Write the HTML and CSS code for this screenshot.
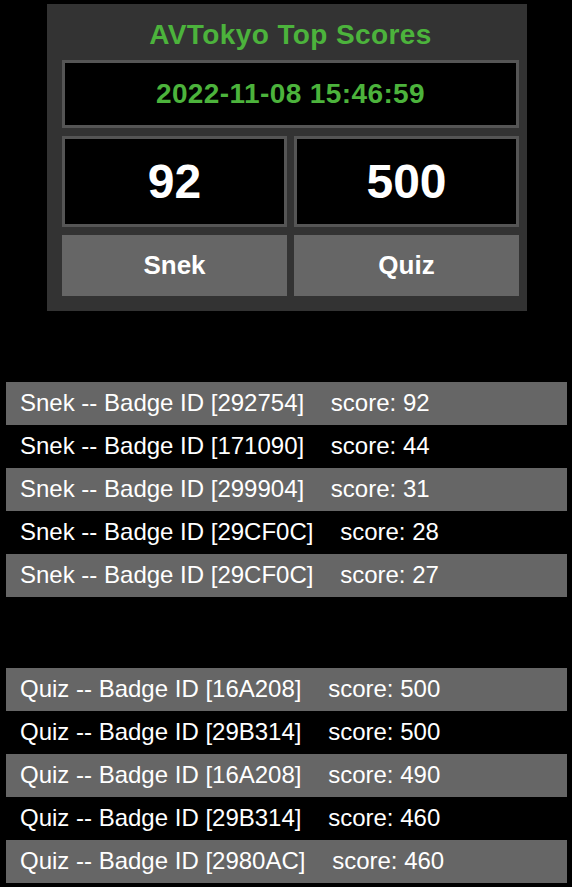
FILE: index.html
```html
<!DOCTYPE html>
<html>
<head>
<meta charset="utf-8">
<title>AVTokyo Top Scores</title>
<link rel="stylesheet" href="styles.css">
</head>
<body>
<div class="panel">
  <h1 class="title">AVTokyo Top Scores</h1>
  <div class="date box">2022-11-08 15:46:59</div>
  <div class="grid">
    <div class="score box">92</div>
    <div class="score box">500</div>
    <div class="btn">Snek</div>
    <div class="btn">Quiz</div>
  </div>
</div>

<div class="list">
  <div class="row">Snek -- Badge ID [292754]&nbsp;&nbsp;&nbsp;&nbsp;score: 92</div>
  <div class="row">Snek -- Badge ID [171090]&nbsp;&nbsp;&nbsp;&nbsp;score: 44</div>
  <div class="row">Snek -- Badge ID [299904]&nbsp;&nbsp;&nbsp;&nbsp;score: 31</div>
  <div class="row">Snek -- Badge ID [29CF0C]&nbsp;&nbsp;&nbsp;&nbsp;score: 28</div>
  <div class="row">Snek -- Badge ID [29CF0C]&nbsp;&nbsp;&nbsp;&nbsp;score: 27</div>
</div>

<div class="list">
  <div class="row">Quiz -- Badge ID [16A208]&nbsp;&nbsp;&nbsp;&nbsp;score: 500</div>
  <div class="row">Quiz -- Badge ID [29B314]&nbsp;&nbsp;&nbsp;&nbsp;score: 500</div>
  <div class="row">Quiz -- Badge ID [16A208]&nbsp;&nbsp;&nbsp;&nbsp;score: 490</div>
  <div class="row">Quiz -- Badge ID [29B314]&nbsp;&nbsp;&nbsp;&nbsp;score: 460</div>
  <div class="row">Quiz -- Badge ID [2980AC]&nbsp;&nbsp;&nbsp;&nbsp;score: 460</div>
</div>
</body>
</html>
```
FILE: styles.css
```css
html, body {
  margin: 0;
  padding: 0;
  background: #000;
}
body {
  font-family: "Liberation Sans", Arial, sans-serif;
  color: #fff;
  padding-top: 4px;
}
.panel {
  box-sizing: border-box;
  width: 480px;
  margin-left: 47px;
  background: #333;
  padding: 0 8px 15px 15px;
}
.title {
  margin: 0;
  padding-top: 15px;
  height: 41px;
  font-size: 28px;
  line-height: 32px;
  font-weight: bold;
  letter-spacing: 0.4px;
  color: #4cb33c;
  text-align: center;
}
.box {
  box-sizing: border-box;
  border: 3px solid #555;
  background: #000;
  text-align: center;
  font-weight: bold;
}
.date {
  height: 68px;
  line-height: 62px;
  font-size: 28px;
  letter-spacing: 0.4px;
  color: #4cb33c;
}
.grid {
  margin-top: 8px;
  display: grid;
  grid-template-columns: 225px 225px;
  column-gap: 7px;
  row-gap: 8px;
}
.score {
  height: 91px;
  line-height: 85px;
  font-size: 48px;
}
.btn {
  height: 61px;
  line-height: 60px;
  background: #666;
  text-align: center;
  font-weight: bold;
  font-size: 26px;
}
.list {
  margin: 71px 5px 0 6px;
}
.row {
  height: 43px;
  box-sizing: border-box;
  padding: 7px 13px 8px 14px;
  font-size: 24px;
  line-height: 28px;
  white-space: nowrap;
}
.row:nth-child(odd) {
  background: #666;
}
```
